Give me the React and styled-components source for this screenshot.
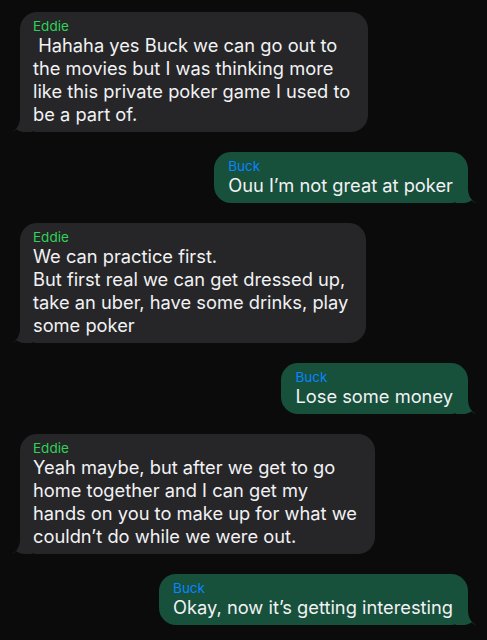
import styled, { createGlobalStyle } from "styled-components";

const GlobalStyle = createGlobalStyle`
  html, body {
    margin: 0;
    padding: 0;
    background: #0b0b0b;
  }
  body {
    font-family: Inter, "Noto Sans", sans-serif;
    -webkit-font-smoothing: antialiased;
  }
`;

const Thread = styled.div`
  display: flex;
  flex-direction: column;
  gap: 20px;
  padding: 12px 19px 20px 20px;
  min-height: 640px;
  box-sizing: border-box;
  background: #0b0b0b;
`;

const Bubble = styled.div`
  position: relative;
  align-self: ${(p) => (p.$mine ? "flex-end" : "flex-start")};
  background: ${(p) => (p.$mine ? "#17503b" : "#262628")};
  border-radius: 17px;
  padding: ${(p) => (p.$mine ? "6px 15px 6px 14px" : "6px 18px 6px 13px")};
  color: #f2f2f4;
`;

const Name = styled.div`
  font-size: 13.5px;
  line-height: 16px;
  color: ${(p) => (p.$mine ? "#0a84ff" : "#30d158")};
`;

const Text = styled.div`
  font-size: 18.3px;
  line-height: 23px;
  white-space: pre-wrap;
`;

const Tail = styled.svg`
  position: absolute;
  bottom: 0;
  width: 20px;
  height: 20px;
  ${(p) =>
    p.$mine
      ? "right: -8px; transform: scaleX(-1);"
      : "left: -8px;"}
`;

const messages = [
  {
    from: "Eddie",
    text: " Hahaha yes Buck we can go out to\nthe movies but I was thinking more\nlike this private poker game I used to\nbe a part of.",
  },
  { from: "Buck", text: "Ouu I’m not great at poker" },
  {
    from: "Eddie",
    text: "We can practice first.\nBut first real we can get dressed up,\ntake an uber, have some drinks, play\nsome poker",
  },
  { from: "Buck", text: "Lose some money" },
  {
    from: "Eddie",
    text: "Yeah maybe, but after we get to go\nhome together and I can get my\nhands on you to make up for what we\ncouldn’t do while we were out.",
  },
  { from: "Buck", text: "Okay, now it’s getting interesting" },
];

const Message = ({ from, text }) => {
  const mine = from === "Buck";
  return (
    <Bubble $mine={mine}>
      <Tail $mine={mine} viewBox="0 0 20 20">
        <path
          d="M8 0 H20 V20 H14 C10.5 20 7 19.3 4 17.2 C3 18.6 1.7 19.5 0 20 C5 17 8 12.5 8 5 Z"
          fill={mine ? "#17503b" : "#262628"}
        />
      </Tail>
      <Name $mine={mine}>{from}</Name>
      <Text>{text}</Text>
    </Bubble>
  );
};

export default function App() {
  return (
    <>
      <GlobalStyle />
      <Thread>
        {messages.map((m, i) => (
          <Message key={i} {...m} />
        ))}
      </Thread>
    </>
  );
}
